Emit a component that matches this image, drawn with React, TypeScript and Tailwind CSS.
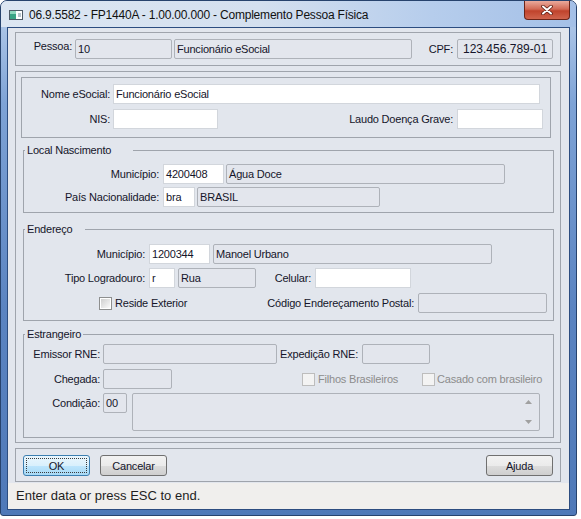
import React from 'react';

// Protheus style dialog: Complemento Pessoa Física

const Edit = ({ className = '', children }: { className?: string; children?: React.ReactNode }) => (
  <div className={`h-[20px] shrink-0 bg-white border border-[#d2d6dc] flex items-center pl-[2px] whitespace-nowrap overflow-hidden ${className}`}>
    {children}
  </div>
);

const Ro = ({ className = '', children }: { className?: string; children?: React.ReactNode }) => (
  <div className={`h-[20px] shrink-0 bg-[#e3e6ed] border border-[#aeb2b9] rounded-[2px] flex items-center pl-[2px] whitespace-nowrap overflow-hidden ${className}`}>
    {children}
  </div>
);

const Label = ({ className = '', children }: { className?: string; children: React.ReactNode }) => (
  <span className={`shrink-0 text-right whitespace-nowrap ${className}`}>{children}</span>
);

const Check = ({ disabled }: { disabled?: boolean }) =>
  disabled ? (
    <span className="w-[13px] h-[13px] shrink-0 border border-[#bdbdbd] bg-[#f3f3f3]" />
  ) : (
    <span className="w-[13px] h-[13px] shrink-0 border border-[#8e8f8f] bg-white p-px">
      <span className="block w-full h-full bg-[linear-gradient(135deg,#cfcfcf_0%,#e9e9e9_60%,#fbfbfb_100%)]" />
    </span>
  );

const Btn = ({ children, focused }: { children: React.ReactNode; focused?: boolean }) =>
  focused ? (
    <button className="w-[67px] h-[21px] rounded-[3px] border border-[#3c7fb1] bg-[linear-gradient(180deg,#eaf6fd_0%,#d9f0fc_50%,#bee6fd_50%,#a7d9f5_100%)] p-[2px]">
      <div className="w-full h-full border border-dotted border-[#3a3a3a] flex items-center justify-center">{children}</div>
    </button>
  ) : (
    <button className="w-[67px] h-[21px] rounded-[3px] border border-[#707070] bg-[linear-gradient(180deg,#f2f2f2_0%,#ebebeb_50%,#dddddd_50%,#cfcfcf_100%)] flex items-center justify-center">
      {children}
    </button>
  );

export default function App() {
  return (
    <div className="w-[581px] h-[519px] bg-white font-['Liberation_Sans',Arial,sans-serif] text-[11px] leading-[14px] tracking-[-0.2px] text-[#15152a]">
      <div className="w-[577px] h-[516px] rounded-t-[7px] rounded-b-[3px] border border-[#27436d] bg-[linear-gradient(180deg,#b9cfec_0%,#7ea3d6_20%,#5b84c1_60%,#4f79b8_100%)] flex flex-col">
        {/* title bar */}
        <div className="h-[26px] shrink-0 flex rounded-t-[6px] bg-[linear-gradient(90deg,#dce6f2_0%,#d4e0ef_45%,#b6cdec_75%,#a4c0e7_100%)]">
          <div className="flex items-center pt-[2px] pl-[8px] gap-[6px]">
            <svg width="14" height="10" viewBox="0 0 14 10">
              <rect x="0.5" y="0.5" width="13" height="9" fill="#ffffff" stroke="#4d5a66" />
              <rect x="1" y="1" width="6" height="8" fill="#3aa384" />
              <rect x="1" y="1" width="6" height="3" fill="#8fd6bd" />
              <rect x="9" y="3" width="3" height="4" fill="#b8c4cc" />
            </svg>
            <span className="text-[12px] tracking-[-0.2px] text-[#111]">06.9.5582 - FP1440A - 1.00.00.000 - Complemento Pessoa Física</span>
          </div>
          <div className="ml-auto mr-[6px] w-[46px] h-[19px] rounded-b-[4px] border border-t-0 border-[#6b2418] bg-[linear-gradient(180deg,#eaaa9c_0%,#d26a55_45%,#c0432c_55%,#d0644d_100%)] flex items-center justify-center">
            <svg width="12" height="10" viewBox="0 0 12 10">
              <path d="M2 1.5 L10 8.5 M10 1.5 L2 8.5" stroke="#5b1b10" strokeWidth="3.6" strokeLinecap="round" />
              <path d="M2 1.5 L10 8.5 M10 1.5 L2 8.5" stroke="#ffffff" strokeWidth="2" strokeLinecap="round" />
            </svg>
          </div>
        </div>

        {/* client */}
        <div className="mx-[6px] h-[483px] border border-[#2c4d80] bg-[#e2e6ed] flex flex-col">
          {/* pessoa panel */}
          <div className="ml-[7px] mt-[4px] w-[546px] h-[34px] border border-[#9fa4ac] flex items-start pt-[6px]">
            <Label className="w-[56px]">Pessoa:</Label>
            <Ro className="ml-[3px] w-[97px]">10</Ro>
            <Ro className="ml-[2px] w-[238px]">Funcionário eSocial</Ro>
            <Label className="w-[41px] h-[20px] flex items-center justify-end">CPF:</Label>
            <Ro className="ml-[4px] w-[96px] text-[12px] tracking-normal pl-[5px]">123.456.789-01</Ro>
          </div>

          {/* main box */}
          <div className="ml-[7px] mt-[5px] w-[546px] border border-[#9fa4ac] pb-[4px]">
            <div className="ml-[5px] mt-[5px] w-[530px] border border-[#9fa4ac] pt-[6px] pb-[8px]">
              <div className="flex items-center">
                <Label className="w-[88px]">Nome eSocial:</Label>
                <Edit className="ml-[3px] w-[427px]">Funcionário eSocial</Edit>
              </div>
              <div className="flex items-center mt-[5px]">
                <Label className="w-[88px]">NIS:</Label>
                <Edit className="ml-[3px] w-[105px]" />
                <Label className="w-[235px]">Laudo Doença Grave:</Label>
                <Edit className="ml-[4px] w-[86px]" />
              </div>
            </div>

            <fieldset className="ml-[7px] mt-[5px] w-[531px] border border-[#9fa4ac] pt-[7px] pb-[5px]">
              <legend className="ml-[1px] w-[108px] pl-[2px] leading-[14px]">Local Nascimento</legend>
              <div className="flex items-center">
                <Label className="w-[135px]">Município:</Label>
                <Edit className="ml-[4px] w-[61px]">4200408</Edit>
                <Ro className="ml-[2px] w-[279px]">Água Doce</Ro>
              </div>
              <div className="flex items-center mt-[3px]">
                <Label className="w-[135px]">País Nacionalidade:</Label>
                <Edit className="ml-[4px] w-[32px]">bra</Edit>
                <Ro className="ml-[2px] w-[183px]">BRASIL</Ro>
              </div>
            </fieldset>

            <fieldset className="ml-[7px] mt-[9px] w-[531px] border border-[#9fa4ac] pt-[8px] pb-[7px]">
              <legend className="ml-[1px] w-[60px] pl-[2px] leading-[14px]">Endereço</legend>
              <div className="flex items-center">
                <Label className="w-[121px]">Município:</Label>
                <Edit className="ml-[4px] w-[61px]">1200344</Edit>
                <Ro className="ml-[3px] w-[279px]">Manoel Urbano</Ro>
              </div>
              <div className="flex items-center mt-[4px]">
                <Label className="w-[121px]">Tipo Logradouro:</Label>
                <Edit className="ml-[4px] w-[26px]">r</Edit>
                <Ro className="ml-[3px] w-[78px]">Rua</Ro>
                <Label className="w-[55px]">Celular:</Label>
                <Edit className="ml-[4px] w-[96px]" />
              </div>
              <div className="flex items-center mt-[5px]">
                <div className="w-[240px] pl-[75px] flex items-center gap-[3px]">
                  <Check />
                  <span>Reside Exterior</span>
                </div>
                <Label className="w-[150px]">Código Endereçamento Postal:</Label>
                <Ro className="ml-[4px] w-[129px]" />
              </div>
            </fieldset>

            <fieldset className="ml-[7px] mt-[6px] w-[531px] border border-[#9fa4ac] pt-[3px] pb-[6px]">
              <legend className="ml-[1px] w-[58px] pl-[2px] leading-[14px]">Estrangeiro</legend>
              <div className="flex items-center">
                <Label className="w-[76px]">Emissor RNE:</Label>
                <Ro className="ml-[3px] w-[174px]" />
                <Label className="w-[81px]">Expedição RNE:</Label>
                <Ro className="ml-[4px] w-[68px]" />
              </div>
              <div className="flex items-center mt-[5px]">
                <Label className="w-[76px]">Chegada:</Label>
                <Ro className="ml-[3px] w-[69px]" />
                <div className="ml-[130px] w-[120px] flex items-center gap-[3px] text-[#8c8c8c]">
                  <Check disabled />
                  <span>Filhos Brasileiros</span>
                </div>
                <div className="flex items-center gap-[2px] text-[#8c8c8c]">
                  <Check disabled />
                  <span>Casado com brasileiro</span>
                </div>
              </div>
              <div className="flex items-start mt-[4px]">
                <Label className="w-[76px] h-[20px] flex items-center justify-end">Condição:</Label>
                <Ro className="ml-[3px] w-[24px]">00</Ro>
                <div className="ml-[5px] w-[408px] h-[38px] bg-[#e3e6ed] border border-[#aeb2b9] rounded-[2px] flex justify-end pr-[4px]">
                  <div className="w-[14px] flex flex-col items-center justify-between py-[6px]">
                    <svg width="7" height="4" viewBox="0 0 7 4"><path d="M0 4 L3.5 0 L7 4 Z" fill="#a0a0a0" /></svg>
                    <svg width="7" height="4" viewBox="0 0 7 4"><path d="M0 0 L7 0 L3.5 4 Z" fill="#a0a0a0" /></svg>
                  </div>
                </div>
              </div>
            </fieldset>
          </div>

          {/* buttons */}
          <div className="ml-[7px] mt-[5px] w-[546px] h-[34px] border border-[#9fa4ac] flex items-start pt-[6px] px-[7px]">
            <Btn focused>OK</Btn>
            <div className="ml-[10px]">
              <Btn>Cancelar</Btn>
            </div>
            <div className="ml-auto">
              <Btn>Ajuda</Btn>
            </div>
          </div>

          {/* status */}
          <div className="mt-[1px] h-[26px] bg-[#f0efed] flex items-center pl-[8px] text-[13px] tracking-normal text-[#1e1e1e]">
            Enter data or press ESC to end.
          </div>
        </div>
      </div>
    </div>
  );
}
